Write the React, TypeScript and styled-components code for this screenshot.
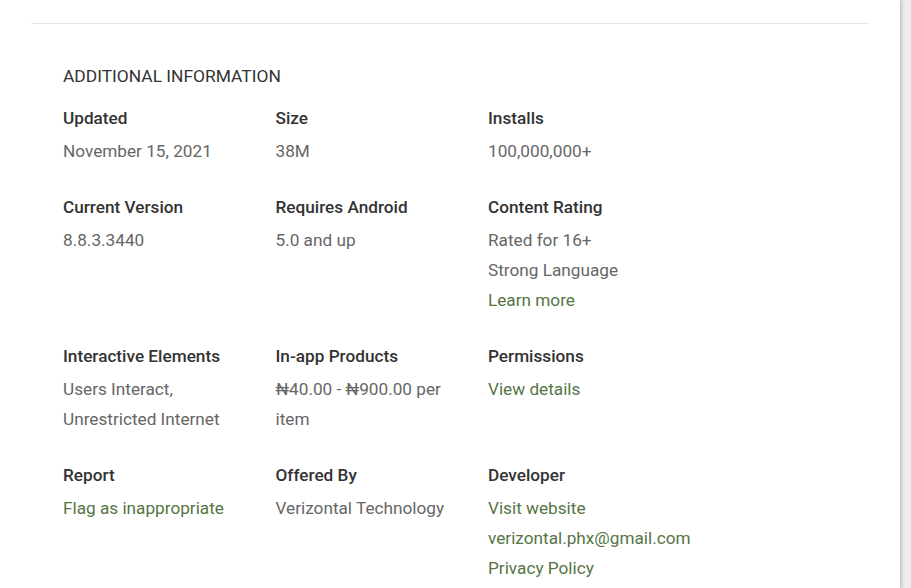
import React from "react";
import styled, { createGlobalStyle } from "styled-components";

const Global = createGlobalStyle`
  html, body { margin: 0; padding: 0; background: #ececec; }
  body { font-family: Roboto, "Noto Sans", Arial, sans-serif; }
`;

const Page = styled.div`
  display: flex;
  min-height: 588px;
  overflow: hidden;
`;

const Card = styled.div`
  width: 900px;
  flex: none;
  background: #fff;
  box-shadow: 1px 0 4px rgba(0, 0, 0, 0.25);
  padding: 23px 31px 0 31px;
  box-sizing: border-box;
  min-height: 588px;
`;

const Divider = styled.hr`
  margin: 0;
  border: 0;
  border-top: 1px solid #e6e6e6;
`;

const Section = styled.section`
  padding: 39px 0 0 32px;
`;

const Heading = styled.h2`
  margin: 0 0 16px 0;
  font-size: 17.4px;
  line-height: 26px;
  font-weight: 400;
  color: #333;
`;

const Grid = styled.div`
  display: grid;
  grid-template-columns: repeat(3, 212.5px);
  row-gap: 28px;
`;

const Cell = styled.div`
  padding-right: 22px;
  min-width: 0;
`;

const Label = styled.div`
  font-size: 17.2px;
  line-height: 26px;
  font-weight: 500;
  color: #333;
  margin-bottom: 5px;
`;

const Value = styled.div<{ $link?: boolean }>`
  font-size: 17.2px;
  line-height: 30px;
  font-weight: 400;
  color: ${(p) => (p.$link ? "#557545" : "#666")};
  white-space: ${(p) => (p.$link ? "nowrap" : "normal")};
`;

type Item = { label: string; values: { text: string; link?: boolean }[] };

const items: Item[] = [
  { label: "Updated", values: [{ text: "November 15, 2021" }] },
  { label: "Size", values: [{ text: "38M" }] },
  { label: "Installs", values: [{ text: "100,000,000+" }] },
  { label: "Current Version", values: [{ text: "8.8.3.3440" }] },
  { label: "Requires Android", values: [{ text: "5.0 and up" }] },
  {
    label: "Content Rating",
    values: [
      { text: "Rated for 16+" },
      { text: "Strong Language" },
      { text: "Learn more", link: true },
    ],
  },
  { label: "Interactive Elements", values: [{ text: "Users Interact, Unrestricted Internet" }] },
  { label: "In-app Products", values: [{ text: "₦40.00 - ₦900.00 per item" }] },
  { label: "Permissions", values: [{ text: "View details", link: true }] },
  { label: "Report", values: [{ text: "Flag as inappropriate", link: true }] },
  { label: "Offered By", values: [{ text: "Verizontal Technology" }] },
  {
    label: "Developer",
    values: [
      { text: "Visit website", link: true },
      { text: "verizontal.phx@gmail.com", link: true },
      { text: "Privacy Policy", link: true },
    ],
  },
];

export default function App() {
  return (
    <>
      <Global />
      <Page>
        <Card>
          <Divider />
          <Section>
            <Heading>ADDITIONAL INFORMATION</Heading>
            <Grid>
              {items.map((it) => (
                <Cell key={it.label}>
                  <Label>{it.label}</Label>
                  {it.values.map((v) => (
                    <Value key={v.text} $link={v.link}>
                      {v.text}
                    </Value>
                  ))}
                </Cell>
              ))}
            </Grid>
          </Section>
        </Card>
      </Page>
    </>
  );
}
